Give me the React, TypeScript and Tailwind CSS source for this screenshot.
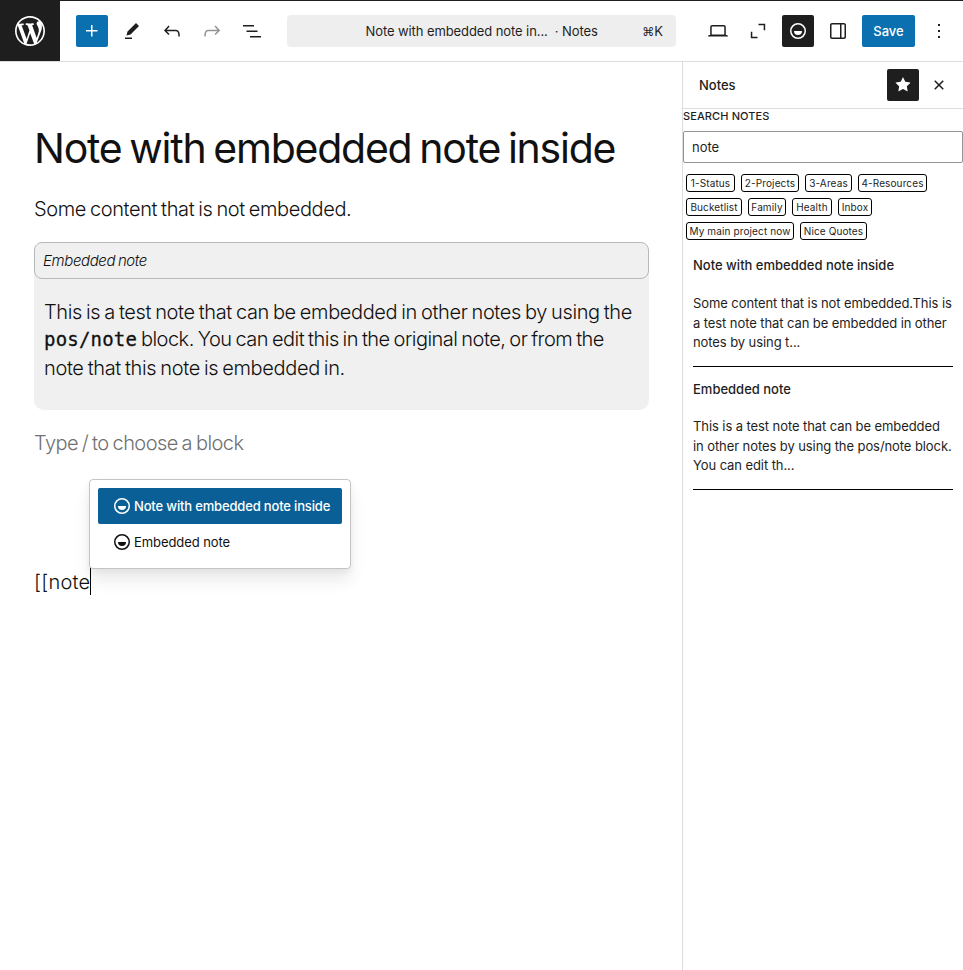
import type { ReactNode } from 'react';

const PATHS = {
  plus: 'M11 12.5V17.5H12.5V12.5H17.5V11H12.5V6H11V11H6V12.5H11Z',
  edit: 'm19 7-3-3-8.5 8.5-1 4 4-1L19 7Zm-7 11.5H5V20h7v-1.5Z',
  undo: 'M18.3 11.7c-.6-.6-1.4-.9-2.3-.9H6.7l2.9-3.3-1.1-1-4.5 5L8.5 16l1-1-2.7-2.7H16c.5 0 .9.2 1.3.5 1 1 1 3.4 1 4.5v.3h1.5v-.2c0-1.5 0-4.3-1.5-5.7z',
  redo: 'M15.6 6.5l-1.1 1 2.9 3.3H8c-.9 0-1.7.3-2.3.9-1.4 1.5-1.4 4.2-1.4 5.6v.2h1.5v-.3c0-1.1 0-3.5 1-4.5.3-.3.7-.5 1.3-.5h9.2L14.5 15l1.1 1.1 4.6-4.6-4.6-5z',
  list: 'M3 6h11v1.5H3V6Zm3.5 5.5h11V13h-11v-1.5ZM21 17H10v1.5h11V17Z',
  desktop:
    'M20.5 16h-.7V8c0-1.1-.9-2-2-2H6.2c-1.1 0-2 .9-2 2v8h-.7c-.8 0-1.5.7-1.5 1.5h20c0-.8-.7-1.5-1.5-1.5zM5.7 8c0-.3.2-.5.5-.5h11.6c.3 0 .5.2.5.5v7.6H5.7V8z',
  expand: 'M12.5 4.8H19.2V11.2H17.7V6.3H12.5ZM4.8 12.7H6.3V17.7H11.5V19.2H4.8Z',
  drawer:
    'M18 4H6c-1.1 0-2 .9-2 2v12c0 1.1.9 2 2 2h12c1.1 0 2-.9 2-2V6c0-1.1-.9-2-2-2zm-4 14.5H6c-.3 0-.5-.2-.5-.5V6c0-.3.2-.5.5-.5h8v13zm4.5-.5c0 .3-.2.5-.5.5h-2.5v-13H18c.3 0 .5.2.5.5v12z',
  more: 'M13 19h-2v-2h2v2zm0-6h-2v-2h2v2zm0-6h-2V5h2v2z',
  star: 'M11.776 4.454a.25.25 0 01.448 0l2.069 4.192a.25.25 0 00.188.137l4.626.672a.25.25 0 01.139.426l-3.348 3.263a.25.25 0 00-.072.222l.79 4.607a.25.25 0 01-.362.263l-4.138-2.175a.25.25 0 00-.232 0l-4.138 2.175a.25.25 0 01-.363-.263l.79-4.607a.25.25 0 00-.071-.222L4.754 9.881a.25.25 0 01.139-.426l4.626-.672a.25.25 0 00.188-.137l2.069-4.192z',
  close:
    'M12 13.06l3.712 3.713 1.061-1.06L13.061 12l3.712-3.712-1.06-1.06L12 10.938 8.288 7.227l-1.061 1.06L10.939 12l-3.712 3.712 1.06 1.061L12 13.061z',
};

function Icon({ name }: { name: keyof typeof PATHS }) {
  return (
    <svg viewBox="0 0 24 24" className="size-6 shrink-0" fill="currentColor" fillRule="evenodd">
      <path d={PATHS[name]} />
    </svg>
  );
}

function NotesIcon() {
  return (
    <svg viewBox="0 0 24 24" className="size-6 shrink-0" fill="currentColor">
      <circle cx="12" cy="12" r="7.25" fill="none" stroke="currentColor" strokeWidth="1.5" />
      <path d="M8 12h8a4 4 0 0 1-8 0Z" />
    </svg>
  );
}

function WordPressLogo() {
  return (
    <svg viewBox="-2 -2 24 24" className="size-9" fill="currentColor">
      <path d="M20 10c0-5.51-4.49-10-10-10C4.48 0 0 4.49 0 10c0 5.52 4.48 10 10 10 5.51 0 10-4.48 10-10zM7.78 15.37L4.37 6.22c.55-.02 1.17-.08 1.17-.08.5-.06.44-1.13-.06-1.11 0 0-1.45.11-2.37.11-.18 0-.37 0-.58-.01C4.12 2.69 6.87 1.11 10 1.11c2.33 0 4.45.87 6.05 2.34-.68-.11-1.65.39-1.65 1.58 0 .74.45 1.36.9 2.1.35.61.55 1.36.55 2.46 0 1.49-1.4 5-1.4 5l-3.03-8.37c.54-.02.82-.17.82-.17.5-.05.44-1.25-.06-1.22 0 0-1.44.12-2.38.12-.87 0-2.33-.12-2.33-.12-.5-.03-.56 1.2-.06 1.22l.92.08 1.26 3.41zM17.41 10c.24-.64.74-1.87.43-4.25.7 1.29 1.05 2.71 1.05 4.25 0 3.29-1.73 6.24-4.4 7.78.97-2.59 1.94-5.2 2.92-7.78zM6.1 18.09C3.12 16.65 1.11 13.53 1.11 10c0-1.3.23-2.48.72-3.59C3.25 10.3 4.67 14.2 6.1 18.09zm4.03-6.63l2.58 6.98c-.86.29-1.76.45-2.71.45-.79 0-1.57-.11-2.29-.33.81-2.38 1.62-4.74 2.42-7.1z" />
    </svg>
  );
}

function ToolButton({ children, className = '' }: { children: ReactNode; className?: string }) {
  return <button className={`flex size-8 shrink-0 items-center justify-center rounded-[2px] ${className}`}>{children}</button>;
}

const TAG_ROWS = [
  [
    { label: '1-Status', width: 'w-[49px]' },
    { label: '2-Projects', width: 'w-[58px]' },
    { label: '3-Areas', width: 'w-[47px]' },
    { label: '4-Resources', width: 'w-[69px]' },
  ],
  [
    { label: 'Bucketlist', width: 'w-[56px]' },
    { label: 'Family', width: 'w-[38px]' },
    { label: 'Health', width: 'w-[40px]' },
    { label: 'Inbox', width: 'w-[34px]' },
  ],
  [
    { label: 'My main project now', width: 'w-[108px]' },
    { label: 'Nice Quotes', width: 'w-[67px]' },
  ],
];

const RESULTS = [
  {
    title: 'Note with embedded note inside',
    lines: ['Some content that is not embedded.This is', 'a test note that can be embedded in other', 'notes by using t...'],
    gap: 'mt-[19px]',
  },
  {
    title: 'Embedded note',
    lines: ['This is a test note that can be embedded', 'in other notes by using the pos/note block.', 'You can edit th...'],
    gap: 'mt-[18px]',
  },
];

function Header() {
  return (
    <header className="flex h-[62px] shrink-0 border-b border-[#dcdcde]">
      <div className="flex w-[60px] shrink-0 items-center justify-center bg-[#1e1e1e] text-white">
        <WordPressLogo />
      </div>
      <div className="flex flex-1 items-center border-t border-[#1d1e22] pr-2 pl-4">
        <div className="flex gap-2">
          <ToolButton className="bg-[#0a70b0] text-white"><Icon name="plus" /></ToolButton>
          <ToolButton><Icon name="edit" /></ToolButton>
          <ToolButton><Icon name="undo" /></ToolButton>
          <ToolButton className="text-[#949494]"><Icon name="redo" /></ToolButton>
          <ToolButton><Icon name="list" /></ToolButton>
        </div>
        <div className="ml-[19px] flex h-8 w-[389px] items-center rounded bg-[#eeeeee] pt-0.5 pr-[13px] pl-[78.5px] whitespace-pre">
          <span className="tracking-[-0.007em]">Note with embedded note in...  · Notes</span>
          <span className="ml-auto flex items-center">
            <span className="font-['DejaVu_Sans','Inter',sans-serif] text-[12px]">⌘</span>K
          </span>
        </div>
        <div className="ml-[26px] flex gap-2">
          <ToolButton><Icon name="desktop" /></ToolButton>
          <ToolButton><Icon name="expand" /></ToolButton>
          <ToolButton className="bg-[#1e1e1e] text-white"><NotesIcon /></ToolButton>
          <ToolButton><Icon name="drawer" /></ToolButton>
          <button className="h-8 w-[53px] rounded-[2px] bg-[#0a70b0] pt-0.5 font-medium text-white">Save</button>
          <ToolButton><Icon name="more" /></ToolButton>
        </div>
      </div>
    </header>
  );
}

function EmbeddedNote() {
  return (
    <section className="mt-[19px] h-[168px] w-[615px] rounded-[10px] bg-[#f0f0f0]">
      <div className="h-[37px] rounded-lg border border-[#b4b9be] pl-2 text-[15px] leading-[35px] font-light tracking-[-0.026em] [word-spacing:-1px] italic">
        Embedded note
      </div>
      <div className="pt-[19px] pl-[10px] text-[20px] leading-7 font-light whitespace-nowrap [word-spacing:-1.2px]">
        <div className="h-[27px] tracking-[-0.019em]">This is a test note that can be embedded in other notes by using the</div>
        <div className="h-[29px] tracking-[-0.026em]">
          <code className="font-['DejaVu_Sans_Mono',monospace] text-[19px] leading-none font-normal tracking-[0.01em] [-webkit-text-stroke:0.3px]">pos/note</code> block. You can edit
          this in the original note, or from the
        </div>
        <div className="tracking-[-0.018em]">note that this note is embedded in.</div>
      </div>
    </section>
  );
}

function Suggestions() {
  return (
    <div className="absolute bottom-[26px] left-[55px] z-10 h-[90px] w-[262px] rounded-[4px] border border-[#c4c4c4] bg-white p-2 shadow-[0_12px_16px_rgba(0,0,0,0.08),0_3px_6px_rgba(0,0,0,0.05)]">
      <div className="flex h-9 items-center rounded-[2px] bg-[#0a6096] pl-3 font-medium tracking-[-0.0125em] whitespace-nowrap text-white">
        <NotesIcon />
        <span className="pt-px">Note with embedded note inside</span>
      </div>
      <div className="flex h-9 items-center pl-3 tracking-[-0.006em]">
        <NotesIcon />
        <span className="pt-px">Embedded note</span>
      </div>
    </div>
  );
}

function Editor() {
  return (
    <main className="flex-1 pl-[34px] text-[#111111]">
      <h1 className="mt-[60px] text-[41px] leading-[52px] font-normal tracking-[-0.03em] whitespace-nowrap [word-spacing:-2.5px]">
        Note with embedded note inside
      </h1>
      <p className="mt-[21px] text-[20px] leading-[28px] font-light tracking-[-0.020em] [word-spacing:-1.2px]">Some content that is not embedded.</p>
      <EmbeddedNote />
      <p className="mt-[19px] text-[20px] leading-7 font-light tracking-[-0.028em] text-[#707070] [word-spacing:-1.2px]">Type / to choose a block</p>
      <div className="relative mt-[110px] flex h-7 w-fit items-center text-[20px] font-light">
        <span className="pt-0.5 tracking-[0.012em]">[[note</span>
        <span className="h-7 w-px bg-black" />
        <div className="text-[13px] font-normal">
          <Suggestions />
        </div>
      </div>
    </main>
  );
}

function Sidebar() {
  return (
    <aside className="w-[281px] shrink-0 border-l border-[#dddddd]">
      <div className="flex h-[47px] items-center border-b border-[#dddddd] pr-2 pl-4">
        <h2 className="flex-1 pt-0.5 font-medium">Notes</h2>
        <div className="flex gap-1">
          <ToolButton className="bg-[#1e1e1e] text-white"><Icon name="star" /></ToolButton>
          <ToolButton><Icon name="close" /></ToolButton>
        </div>
      </div>
      <label className="block text-[11px] leading-[15px] font-medium tracking-[0.01em] uppercase">Search Notes</label>
      <input
        defaultValue="note"
        className="mt-[7px] block h-8 w-full rounded-[2px] border border-[#949494] px-2 text-[13px] outline-none"
      />
      <div className="mt-[11px] flex flex-col gap-1.5 pl-[3px]">
        {TAG_ROWS.map((row, index) => (
          <div key={index} className="flex gap-1.5">
            {row.map((tag) => (
              <span
                key={tag.label}
                className={`flex h-[18px] items-center justify-center rounded-[3px] border border-black text-[10px] tracking-[0.012em] whitespace-nowrap ${tag.width}`}
              >
                {tag.label}
              </span>
            ))}
          </div>
        ))}
      </div>
      <div className="px-[10px] pt-[15px]">
        {RESULTS.map((result) => (
          <article key={result.title} className="mb-[12px] border-b border-black pb-[13.5px]">
            <h3 className="leading-5 font-medium">{result.title}</h3>
            <p className={`leading-[19.5px] tracking-[-0.0065em] whitespace-nowrap ${result.gap}`}>
              {result.lines.map((line) => (
                <span key={line} className="block">{line}</span>
              ))}
            </p>
          </article>
        ))}
      </div>
    </aside>
  );
}

export default function App() {
  return (
    <div className="flex h-[970px] w-[963px] flex-col overflow-hidden bg-white font-['Inter',sans-serif] text-[13px] text-[#1e1e1e]">
      <Header />
      <div className="flex flex-1">
        <Editor />
        <Sidebar />
      </div>
    </div>
  );
}
